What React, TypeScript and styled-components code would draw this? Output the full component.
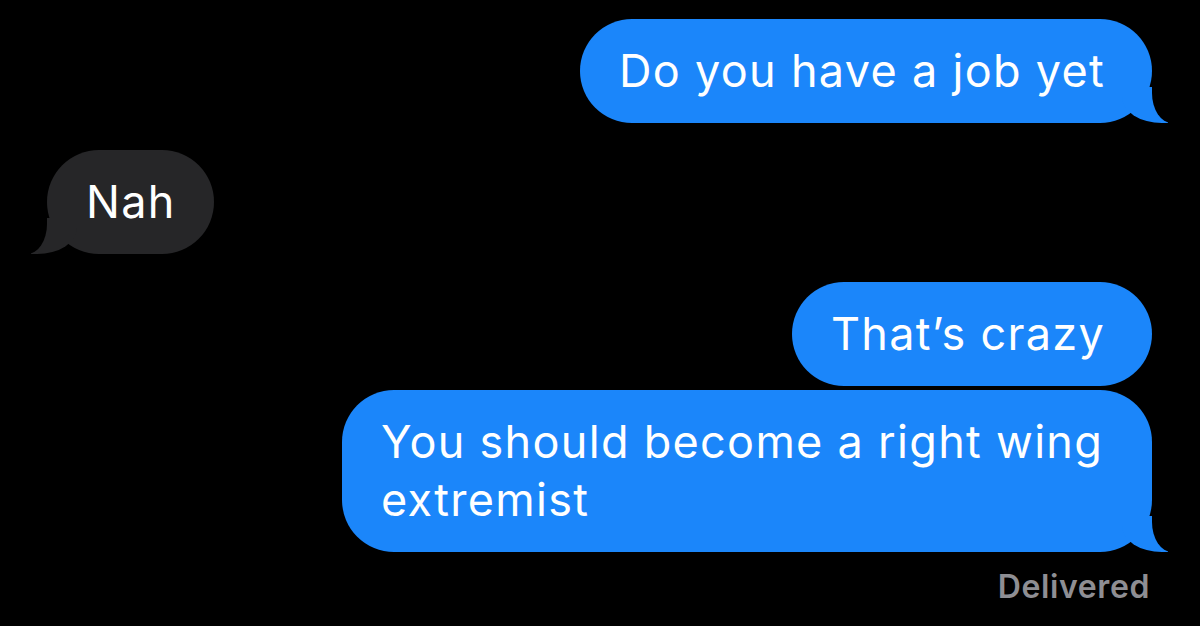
import React from "react";
import styled, { createGlobalStyle, css } from "styled-components";

const GlobalStyle = createGlobalStyle`
  html, body { margin: 0; padding: 0; background: #000; }
  body { font-family: Inter, "Noto Sans", "Liberation Sans", sans-serif; -webkit-font-smoothing: antialiased; }
`;

const BLUE = "#1b86fa";
const GRAY = "#262628";

const Thread = styled.div`
  width: 1200px;
  height: 626px;
  box-sizing: border-box;
  padding: 19px 48px 0 47px;
  display: flex;
  flex-direction: column;
  background: #000;
  overflow: hidden;
`;

const sentTail = css`
  &::before {
    content: "";
    position: absolute;
    bottom: 0;
    right: -16px;
    width: 46px;
    height: 36px;
    background: ${BLUE};
    border-bottom-left-radius: 40px 26px;
  }
  &::after {
    content: "";
    position: absolute;
    bottom: 0;
    right: -60px;
    width: 60px;
    height: 46px;
    background: #000;
    border-bottom-left-radius: 20px 30px;
  }
`;

const receivedTail = css`
  &::before {
    content: "";
    position: absolute;
    bottom: 0;
    left: -16px;
    width: 46px;
    height: 36px;
    background: ${GRAY};
    border-bottom-right-radius: 40px 26px;
  }
  &::after {
    content: "";
    position: absolute;
    bottom: 0;
    left: -60px;
    width: 60px;
    height: 46px;
    background: #000;
    border-bottom-right-radius: 20px 30px;
  }
`;

const Bubble = styled.div<{ $sent?: boolean; $tail?: boolean; $gap?: number }>`
  position: relative;
  max-width: 810px;
  box-sizing: border-box;
  margin-top: ${(p) => p.$gap ?? 0}px;
  padding: ${(p) => (p.$sent ? "23px 47px 23px 39px" : "23px 38px 23px 39px")};
  border-radius: 52px;
  font-size: 45px;
  line-height: 58px;
  letter-spacing: 1.3px;
  color: #fff;
  align-self: ${(p) => (p.$sent ? "flex-end" : "flex-start")};
  background: ${(p) => (p.$sent ? BLUE : GRAY)};
  ${(p) => p.$tail && (p.$sent ? sentTail : receivedTail)}
`;

const Status = styled.div`
  align-self: flex-end;
  margin-top: 17px;
  margin-right: 2px;
  font-size: 32px;
  line-height: 36px;
  font-weight: 600;
  letter-spacing: 0.6px;
  color: #8e8e93;
`;

export default function App() {
  return (
    <>
      <GlobalStyle />
      <Thread>
        <Bubble $sent $tail>Do you have a job yet</Bubble>
        <Bubble $tail $gap={27}>Nah</Bubble>
        <Bubble $sent $gap={28}>That’s crazy</Bubble>
        <Bubble $sent $tail $gap={4}>
          You should become a right wing extremist
        </Bubble>
        <Status>Delivered</Status>
      </Thread>
    </>
  );
}
